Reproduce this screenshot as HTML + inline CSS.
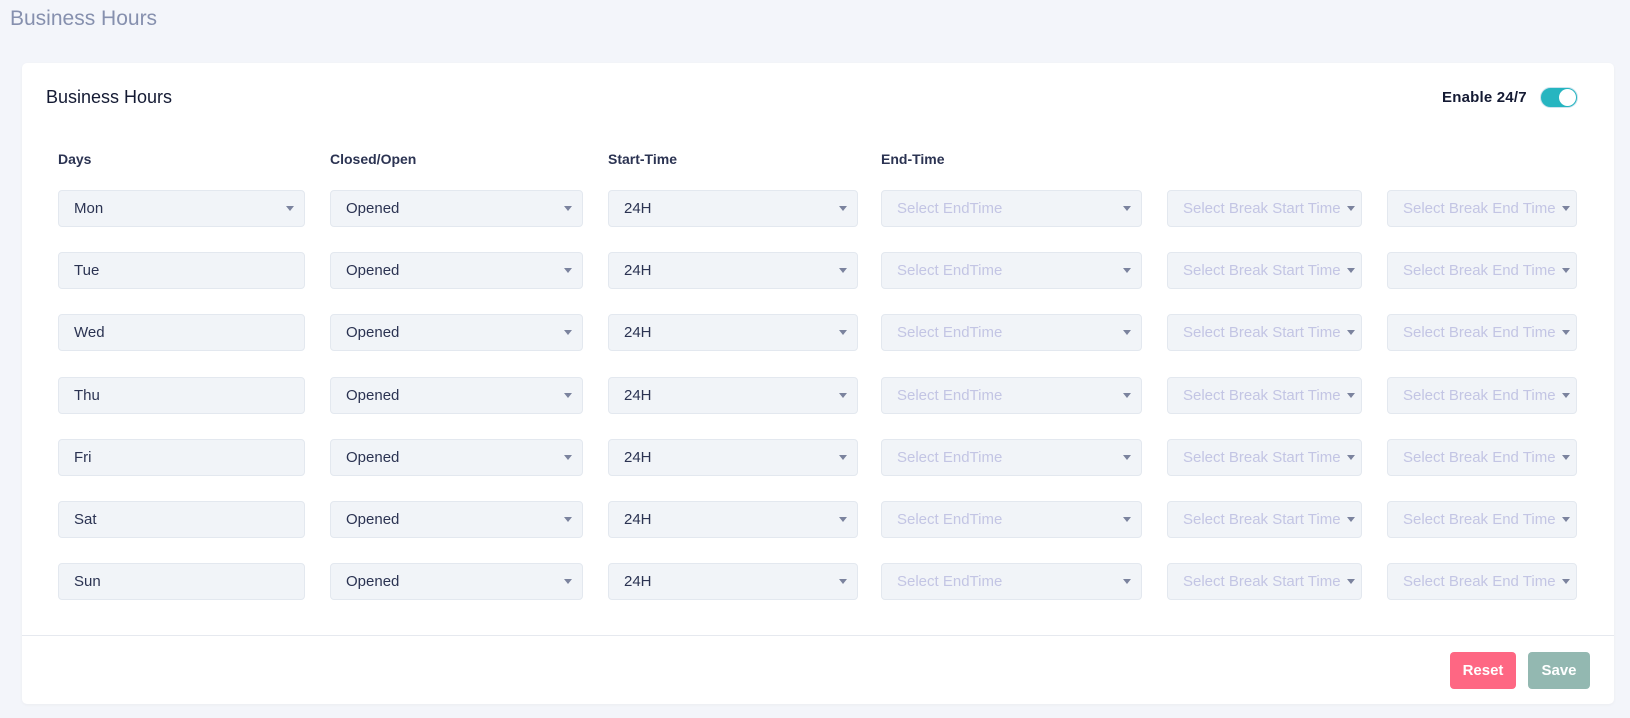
<!DOCTYPE html>
<html><head><meta charset="utf-8"><style>
*{box-sizing:border-box;margin:0;padding:0}
body{width:1630px;height:718px;background:#f3f5fa;font-family:"Liberation Sans",sans-serif;position:relative;overflow:hidden}
.pt{position:absolute;left:10px;top:7px;font-size:21px;color:#8690ae}
.card{position:absolute;left:22px;top:63px;width:1592px;height:641px;background:#fff;border-radius:5px;box-shadow:0 1px 3px rgba(0,0,0,.04)}
.ct{position:absolute;left:46px;top:87px;font-size:18px;color:#141a33}
.en{position:absolute;left:1442px;top:89px;font-size:15px;font-weight:bold;color:#141a33;letter-spacing:.2px}
.tg{position:absolute;left:1540px;top:87px;width:38px;height:21px;border-radius:11px;background:#26b5c0;border:1px solid #cde3ee}
.tg:after{content:"";position:absolute;right:1px;top:1px;width:17px;height:17px;border-radius:50%;background:#fff}
.h{position:absolute;top:151px;font-size:14px;font-weight:bold;color:#2b3352}
.f{position:absolute;height:37px;background:#f1f4f8;border:1px solid #e3e8ef;border-radius:4px;font-size:15px;color:#2b3352;line-height:35px;padding-left:15px;white-space:nowrap;overflow:hidden}
.f.p{color:#c3c5e4}
.f .a{position:absolute;right:10px;top:15px;width:0;height:0;border-left:4.5px solid transparent;border-right:4.5px solid transparent;border-top:5px solid #7b839e}
.f.n .a{right:6px}
.div{position:absolute;left:22px;top:635px;width:1592px;height:1px;background:#e6e9ef}
.b{position:absolute;top:652px;height:37px;border-radius:4px;color:#fff;font-size:15px;font-weight:600;line-height:37px;text-align:center}
</style></head><body>
<div class="pt">Business Hours</div>
<div class="card"></div>
<div class="ct">Business Hours</div>
<div class="en">Enable 24/7</div>
<div class="tg"></div>
<div class="h" style="left:58px">Days</div>
<div class="h" style="left:330px">Closed/Open</div>
<div class="h" style="left:608px">Start-Time</div>
<div class="h" style="left:881px">End-Time</div>
<div id="rows"></div>
<div class="div"></div>
<div class="b" style="left:1450px;width:66px;background:#fe6783">Reset</div>
<div class="b" style="left:1528px;width:62px;background:#93b8b1">Save</div>
<script>
var d=["Mon","Tue","Wed","Thu","Fri","Sat","Sun"],h="";
d.forEach(function(x,i){var t=190+i*62.2;
h+='<div class="f" style="left:58px;top:'+t+'px;width:247px">'+x+(i==0?'<span class="a"></span>':'')+'</div>';
h+='<div class="f" style="left:330px;top:'+t+'px;width:253px">Opened<span class="a"></span></div>';
h+='<div class="f" style="left:608px;top:'+t+'px;width:250px">24H<span class="a"></span></div>';
h+='<div class="f p" style="left:881px;top:'+t+'px;width:261px">Select EndTime<span class="a"></span></div>';
h+='<div class="f p n" style="left:1167px;top:'+t+'px;width:195px">Select Break Start Time<span class="a"></span></div>';
h+='<div class="f p n" style="left:1387px;top:'+t+'px;width:190px">Select Break End Time<span class="a"></span></div>';});
document.getElementById("rows").innerHTML=h;
</script>
</body></html>
